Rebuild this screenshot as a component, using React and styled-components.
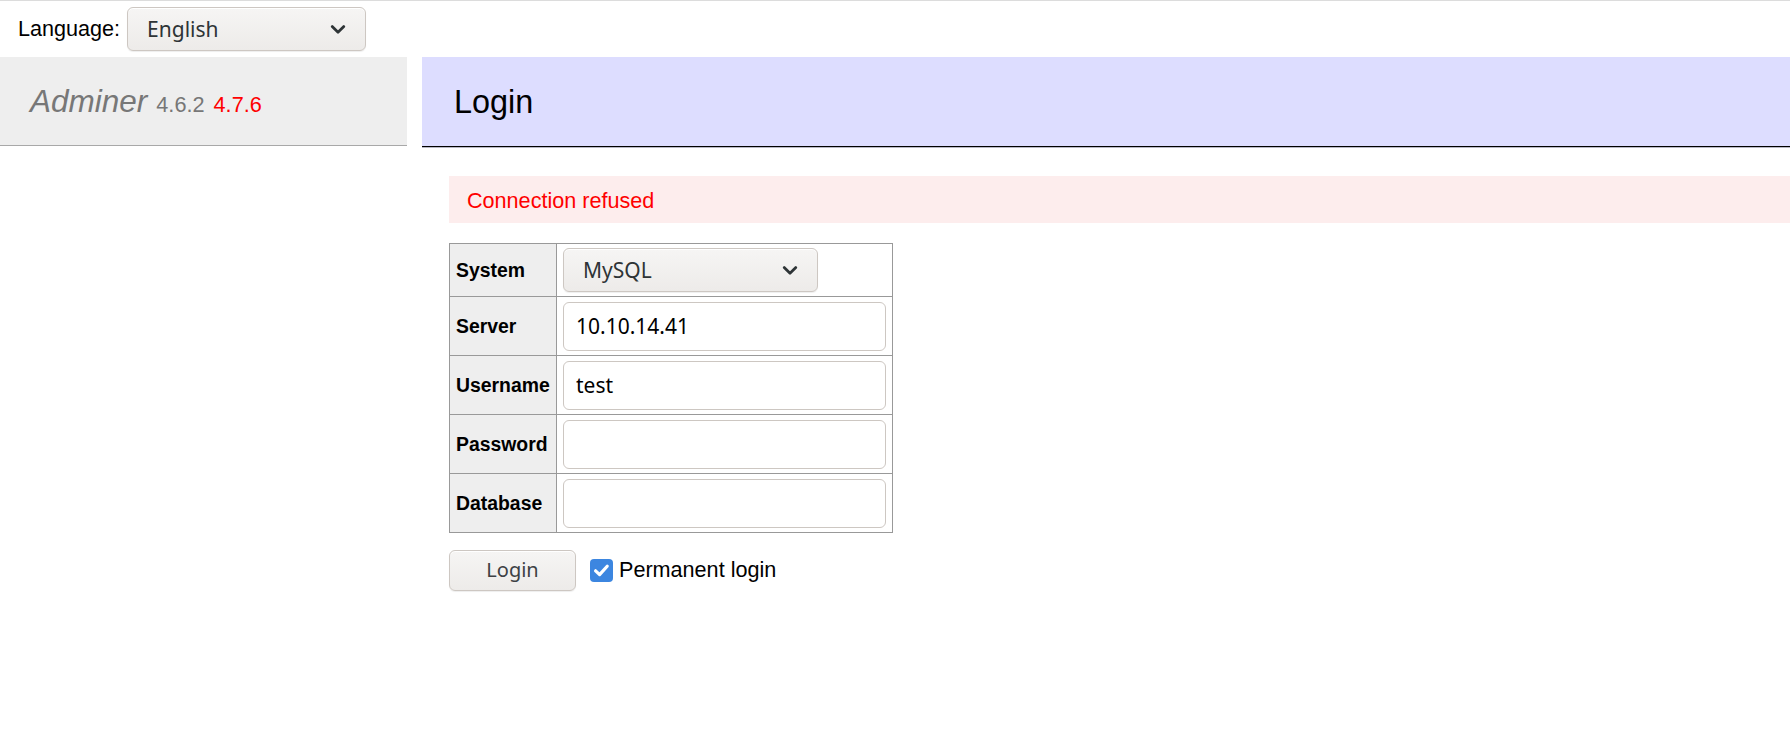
import React from "react";
import styled, { createGlobalStyle } from "styled-components";

/* Adminer login page, with a "Connection refused" error above the form. */

const GlobalStyle = createGlobalStyle`
  html, body {
    margin: 0;
    padding: 0;
    background: #fff;
  }
  body {
    font-family: "Liberation Sans", Arial, sans-serif;
    font-size: 21.6px;
    line-height: 1.25;
    color: #000;
  }
`;

const controlFont = `"Noto Sans", "Open Sans", sans-serif`;

const Chevron = () => (
  <svg width="16" height="11" viewBox="0 0 16 11" aria-hidden="true">
    <polyline
      points="2.2,2.6 8,8.2 13.8,2.6"
      fill="none"
      stroke="#2e3436"
      strokeWidth="2.8"
      strokeLinecap="round"
      strokeLinejoin="round"
    />
  </svg>
);

const Select = ({ value, width, height }) => (
  <StyledSelect $width={width} $height={height}>
    <span>{value}</span>
    <Chevron />
  </StyledSelect>
);

const Checkbox = () => (
  <StyledCheck>
    <svg width="19" height="19" viewBox="0 0 19 19" aria-hidden="true">
      <polyline
        points="3.6,9.8 7.6,13.6 15.2,5.2"
        fill="none"
        stroke="#fff"
        strokeWidth="3.2"
        strokeLinecap="round"
        strokeLinejoin="round"
      />
    </svg>
  </StyledCheck>
);

const fields = [
  { label: "Server", value: "10.10.14.41" },
  { label: "Username", value: "test" },
  { label: "Password", value: "", type: "password" },
  { label: "Database", value: "" },
];

const App = () => {
  return (
    <>
      <GlobalStyle />
      <StyledPage>
        <StyledLang>
          <span>Language:</span>
          <Select value="English" width={239} height={44} />
        </StyledLang>

        <StyledLayout>
          <StyledMenu>
            <StyledLogo>
              <StyledBrand>Adminer</StyledBrand> <StyledVersion>4.6.2</StyledVersion>{" "}
              <StyledVersion $new>4.7.6</StyledVersion>
            </StyledLogo>
          </StyledMenu>

          <StyledContent>
            <StyledHeading>Login</StyledHeading>
            <StyledBody>
              <StyledError>Connection refused</StyledError>

              <StyledTable>
                <tbody>
                  <tr>
                    <StyledTh>System</StyledTh>
                    <StyledTd>
                      <Select value="MySQL" width={255} height={44} />
                    </StyledTd>
                  </tr>
                  {fields.map((f) => (
                    <tr key={f.label}>
                      <StyledTh>{f.label}</StyledTh>
                      <StyledTd $tall>
                        <StyledInput type={f.type || "text"} defaultValue={f.value} />
                      </StyledTd>
                    </tr>
                  ))}
                </tbody>
              </StyledTable>

              <StyledActions>
                <StyledButton type="button">Login</StyledButton>
                <StyledCheckLabel>
                  <Checkbox />
                  Permanent login
                </StyledCheckLabel>
              </StyledActions>
            </StyledBody>
          </StyledContent>
        </StyledLayout>
      </StyledPage>
    </>
  );
};

const StyledPage = styled.div`
  border-top: 1px solid #dcdcdc;
  min-height: 735px;
`;

const StyledLang = styled.div`
  display: flex;
  align-items: center;
  gap: 7px;
  box-sizing: border-box;
  height: 56px;
  padding: 6px 0 6px 18px;
`;

const StyledSelect = styled.div`
  display: flex;
  align-items: center;
  justify-content: space-between;
  box-sizing: border-box;
  width: ${(p) => p.$width}px;
  height: ${(p) => p.$height}px;
  padding: 0 19px 0 19px;
  border: 1px solid #cdc7c2;
  border-radius: 6px;
  background: linear-gradient(#f6f5f4, #edebe9);
  box-shadow: inset 0 1px #fff, 0 1px 1px rgba(0, 0, 0, 0.07);
  font-family: ${controlFont};
  font-size: 21px;
  color: #2e3436;
`;

const StyledLayout = styled.div`
  display: flex;
  align-items: flex-start;
`;

const StyledMenu = styled.div`
  width: 407px;
  flex: none;
`;

const StyledLogo = styled.h1`
  margin: 0;
  box-sizing: border-box;
  height: 89px;
  padding: 24px 0 0 30px;
  background: #eee;
  border-bottom: 1px solid #a8a8a8;
  font-size: 32.4px;
  line-height: 40px;
  font-weight: normal;
  color: #777;
  white-space: nowrap;
`;

const StyledBrand = styled.span`
  font-style: italic;
  font-size: 31.5px;
`;

const StyledVersion = styled.span`
  font-size: 21.7px;
  color: ${(p) => (p.$new ? "#f00" : "#777")};
`;

const StyledContent = styled.div`
  flex: 1;
  margin-left: 15px;
`;

const StyledHeading = styled.h2`
  margin: 0;
  box-sizing: border-box;
  height: 90px;
  padding: 25px 32px 0;
  background: #ddf;
  border-bottom: 1px solid #000;
  box-shadow: 0 1px 0 #b8b8c4;
  font-size: 32.4px;
  line-height: 40px;
  font-weight: normal;
  color: #000;
`;

const StyledBody = styled.div`
  padding: 29px 0 0 27px;
`;

const StyledError = styled.div`
  display: flex;
  align-items: center;
  height: 47px;
  padding: 3px 18px 0;
  box-sizing: border-box;
  background: #fdeded;
  color: #f00;
`;

const StyledTable = styled.table`
  border-collapse: collapse;
  margin-top: 20px;
  font-size: 19.4px;
  border-top: 1px solid #999;
  border-left: 1px solid #999;
`;

const StyledTh = styled.th`
  width: 94px;
  padding: 4px 6px;
  border-right: 1px solid #999;
  border-bottom: 1px solid #999;
  background: #eee;
  text-align: left;
  font-weight: bold;
  vertical-align: middle;
`;

const StyledTd = styled.td`
  width: 323px;
  padding: ${(p) => (p.$tall ? "5px 6px 4px" : "4px 6px")};
  border-right: 1px solid #999;
  border-bottom: 1px solid #999;
  vertical-align: middle;
`;

const StyledInput = styled.input`
  display: block;
  box-sizing: border-box;
  width: 323px;
  height: 49px;
  margin: 0;
  padding: 0 12px 2px;
  border: 1px solid #cdc7c2;
  border-radius: 6px;
  background: #fff;
  font-family: ${controlFont};
  font-size: 21px;
  color: #000;
  outline: none;
`;

const StyledActions = styled.div`
  display: flex;
  align-items: center;
  gap: 14px;
  margin-top: 17px;
`;

const StyledButton = styled.button`
  box-sizing: border-box;
  width: 127px;
  height: 41px;
  padding: 0 0 2px;
  border: 1px solid #cdc7c2;
  border-radius: 6px;
  background: linear-gradient(#f6f5f4, #edebe9);
  box-shadow: inset 0 1px #fff, 0 1px 1px rgba(0, 0, 0, 0.07);
  font-family: ${controlFont};
  font-size: 20px;
  color: #3d4144;
`;

const StyledCheckLabel = styled.label`
  display: flex;
  align-items: center;
  gap: 6px;
  font-size: 21.6px;
  color: #000;
`;

const StyledCheck = styled.span`
  display: flex;
  align-items: center;
  justify-content: center;
  width: 23px;
  height: 23px;
  border-radius: 4px;
  background: #3c86e0;
`;

export default App;
